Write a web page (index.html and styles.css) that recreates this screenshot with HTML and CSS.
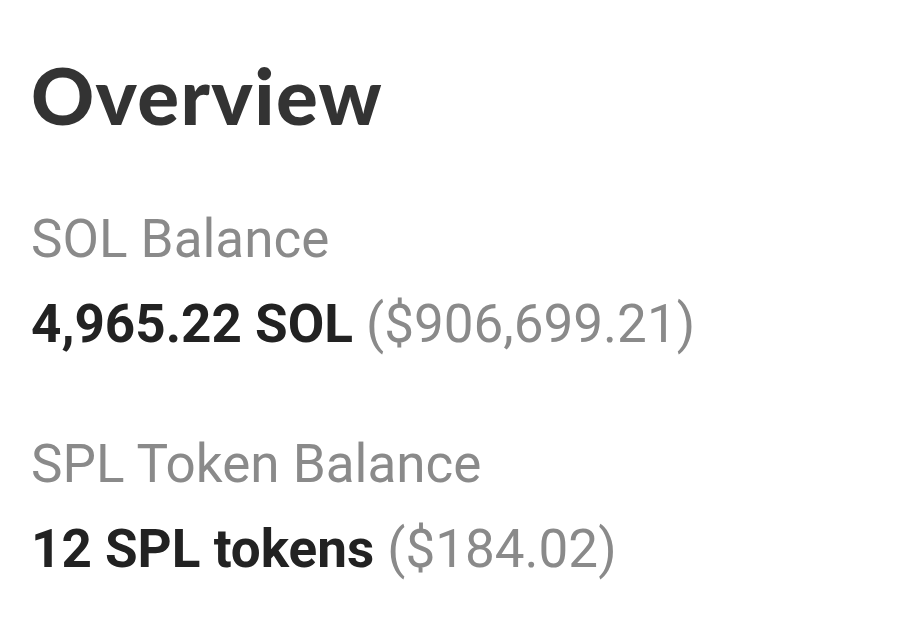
FILE: index.html
```html
<!DOCTYPE html>
<html>
<head>
<meta charset="utf-8">
<link rel="stylesheet" href="styles.css">
</head>
<body>
<main class="overview">
  <h1 class="title">Overview</h1>
  <section class="item">
    <div class="label">SOL Balance</div>
    <div class="value"><strong>4,965.22 SOL</strong> <span class="usd">($906,699.21)</span></div>
  </section>
  <section class="item">
    <div class="label">SPL Token Balance</div>
    <div class="value"><strong>12 SPL tokens</strong> <span class="usd">($184.02)</span></div>
  </section>
</main>
</body>
</html>
```
FILE: styles.css
```css
html, body {
  margin: 0;
  padding: 0;
  background: #ffffff;
}
.overview {
  padding: 53px 0 0 31px;
  font-family: Roboto, "Liberation Sans", sans-serif;
}
.title {
  margin: 0;
  font-family: Lato, "Noto Sans", sans-serif;
  font-weight: 900;
  font-size: 78px;
  line-height: 84px;
  color: #333333;
  letter-spacing: 1.4px;
}
.item {
  margin-top: 60px;
}
.item + .item {
  margin-top: 55px;
}
.label {
  font-size: 53px;
  line-height: 85px;
  color: #8a8a8a;
}
.value {
  font-size: 53px;
  line-height: 85px;
  color: #222222;
}
.value strong {
  font-weight: 700;
}
.usd {
  color: #8a8a8a;
}
```
